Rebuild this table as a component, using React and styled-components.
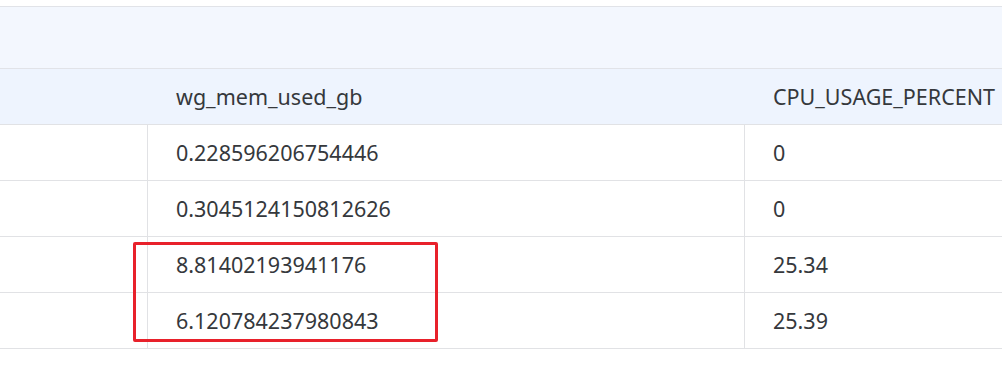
import React from "react";
import styled, { createGlobalStyle } from "styled-components";

const Global = createGlobalStyle`
  html, body { margin: 0; padding: 0; background: #fff; }
  body { font-family: "Noto Sans", "Open Sans", sans-serif; }
`;

const Page = styled.div`
  position: relative;
  width: 1002px;
  height: 379px;
  overflow: hidden;
  padding-top: 6px;
  box-sizing: border-box;
`;

const Toolbar = styled.div`
  height: 61px;
  background: #f3f7fe;
  border-top: 1px solid #e1e3e8;
  border-bottom: 1px solid #e1e3e8;
`;

const Grid = styled.div`
  display: grid;
  grid-template-columns: 148px 597px 1fr;
`;

const Cell = styled.div`
  height: 55px;
  display: flex;
  align-items: center;
  padding-left: 28px;
  font-size: 21.5px;
  color: #35383c;
  background: ${(p) => (p.$head ? "#eef4fe" : "#fff")};
  border-bottom: 1px solid #e1e2e5;
  border-left: ${(p) => (p.$first || p.$head ? "none" : "1px solid #e1e2e5")};
  box-sizing: content-box;
  white-space: nowrap;
  ${(p) => (p.$first ? "padding-left: 0;" : "")}
  ${(p) => (p.$head || p.$first ? "" : "margin-left: -1px;")}
`;

const Highlight = styled.div`
  position: absolute;
  left: 133px;
  top: 242px;
  width: 299px;
  height: 94px;
  border: 3px solid #e8212b;
  border-radius: 2px;
`;

const rows = [
  ["0.228596206754446", "0"],
  ["0.3045124150812626", "0"],
  ["8.81402193941176", "25.34"],
  ["6.120784237980843", "25.39"],
];

export default function App() {
  return (
    <>
      <Global />
      <Page>
        <Toolbar />
        <Grid>
          <Cell $head $first />
          <Cell $head>wg_mem_used_gb</Cell>
          <Cell $head>CPU_USAGE_PERCENT</Cell>
          {rows.map((r, i) => (
            <React.Fragment key={i}>
              <Cell $first />
              <Cell>{r[0]}</Cell>
              <Cell>{r[1]}</Cell>
            </React.Fragment>
          ))}
        </Grid>
        <Highlight />
      </Page>
    </>
  );
}
